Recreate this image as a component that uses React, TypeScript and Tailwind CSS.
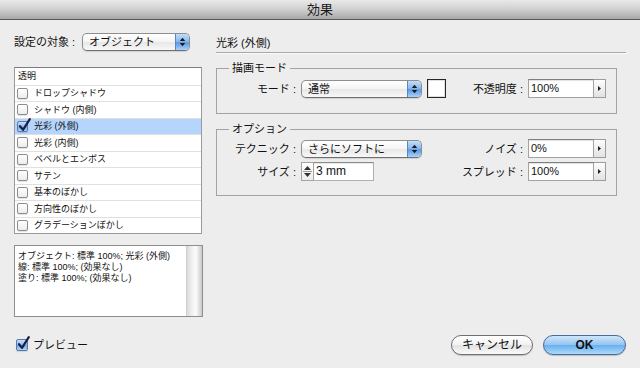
import React from "react";

const FONT = '"Liberation Sans", "Noto Sans CJK JP", sans-serif';

function PopArrows() {
  return (
    <svg width="7" height="10" viewBox="0 0 7 10">
      <path d="M3.5 0.8 L6.2 4 L0.8 4 Z" fill="#1a1a1a" />
      <path d="M3.5 9.2 L6.2 6 L0.8 6 Z" fill="#1a1a1a" />
    </svg>
  );
}

function Popup({ label, w }: { label: string; w: string }) {
  return (
    <div
      className={
        "flex h-[18px] shrink-0 overflow-hidden rounded-[5px] border border-[#8e8e8e] border-b-[#6f6f6f] bg-[linear-gradient(#ffffff,#f4f4f4_50%,#e7e7e7_51%,#f8f8f8)] shadow-[0_1px_1px_rgba(0,0,0,0.12)] " +
        w
      }
    >
      <div className="flex-1 truncate pl-[6px] text-[11px] leading-[16px] text-[#111]">{label}</div>
      <div className="flex w-[14px] items-center justify-center border-l border-[#5d84bb] bg-[linear-gradient(#c2ddf9,#8bbaf0_45%,#5b98e4_55%,#a8d2fa)]">
        <PopArrows />
      </div>
    </div>
  );
}

function NumField({ value }: { value: string }) {
  return (
    <div className="flex h-[19px] w-[78px] shrink-0">
      <div className="flex-1 border border-[#a2a2a2] border-t-[#7f7f7f] bg-white pl-[2px] text-[11px] leading-[17px] text-[#111] shadow-[inset_0_1px_1px_rgba(0,0,0,0.12)]">
        {value}
      </div>
      <div className="flex w-[12px] items-center justify-center border border-l-0 border-[#9c9c9c] bg-[linear-gradient(#fdfdfd,#e2e2e2)]">
        <svg width="3" height="5" viewBox="0 0 3 5">
          <path d="M0 0 L3 2.5 L0 5 Z" fill="#222" />
        </svg>
      </div>
    </div>
  );
}

function CheckBox({ checked, size }: { checked?: boolean; size: string }) {
  return (
    <div className="relative shrink-0">
      <div
        className={
          (checked
            ? "border-[#5c7aa6] bg-[linear-gradient(#c6e0fb,#8fbdf0_50%,#6ea6ea_51%,#a9d3fb)] "
            : "border-[#8d8d8d] bg-[linear-gradient(#ffffff,#ececec)] ") +
          "rounded-[2px] border shadow-[0_1px_1px_rgba(0,0,0,0.12)] " +
          size
        }
      />
      {checked && (
        <svg
          className="absolute left-[1px] top-[-3px]"
          width="13"
          height="14"
          viewBox="0 0 13 14"
        >
          <path
            d="M2 8.2 L5 11.8 L11.8 1.2"
            fill="none"
            stroke="#1b1f45"
            strokeWidth="2.2"
            strokeLinecap="round"
            strokeLinejoin="round"
          />
        </svg>
      )}
    </div>
  );
}

const items = [
  "ドロップシャドウ",
  "シャドウ (内側)",
  "光彩 (外側)",
  "光彩 (内側)",
  "ベベルとエンボス",
  "サテン",
  "基本のぼかし",
  "方向性のぼかし",
  "グラデーションぼかし",
];

export default function App() {
  return (
    <div
      className="h-[368px] w-[640px] overflow-hidden bg-[#ededed] text-[#111]"
      style={{ fontFamily: FONT }}
    >
      {/* title bar */}
      <div className="flex h-[20px] items-center justify-center border-b border-[#585858] bg-[linear-gradient(#e9e9e9,#cfcfcf_50%,#a7a7a7)] text-[13px] leading-[19px] text-[#1a1a1a]">
        効果
      </div>

      {/* main */}
      <div className="flex items-start pl-[14px] pt-[13px]">
        {/* left column */}
        <div className="flex w-[189px] flex-col">
          <div className="flex h-[18px] items-center">
            <span className="w-[68px] text-[11px] leading-[14px]">設定の対象 :</span>
            <Popup label="オブジェクト" w="w-[108px]" />
          </div>

          <div className="mt-[16px] flex h-[167px] w-[188px] flex-col border border-[#9a9a9a] border-t-[#7d7d7d] bg-white">
            <div className="flex h-[16.5px] items-center pl-[3px] text-[9px] leading-[12px]">透明</div>
            {items.map((t) => {
              const sel = t === "光彩 (外側)";
              return (
                <div
                  key={t}
                  className={
                    "flex h-[16.5px] items-center gap-[6px] border-t border-[#e0e0e0] pl-[2px] text-[9px] leading-[12px] " +
                    (sel ? "bg-[#b5d5fd]" : "")
                  }
                >
                  <CheckBox checked={sel} size="h-[11px] w-[11px]" />
                  <span>{t}</span>
                </div>
              );
            })}
          </div>

          <div className="mt-[11px] flex h-[72px] border border-[#8e8e8e] bg-white">
            <div className="flex-1 pl-[3px] pt-[5px] text-[9px] leading-[11px]">
              <div>オブジェクト: 標準 100%; 光彩 (外側)</div>
              <div>線: 標準 100%; (効果なし)</div>
              <div>塗り: 標準 100%; (効果なし)</div>
            </div>
            <div className="w-[16px] border-l border-[#d0d0d0] bg-[linear-gradient(to_right,#dadada,#f2f2f2_35%,#fbfbfb_60%,#c9c9c9)]" />
          </div>
        </div>

        {/* right column */}
        <div className="ml-[13px] flex w-[410px] flex-col">
          <div className="flex h-[20px] items-center border-b border-[#a9a9a9] text-[11px] leading-[14px] shadow-[0_1px_0_#fbfbfb]">
            光彩 (外側)
          </div>

          <fieldset className="mt-[8px] w-[401px] border border-[#a3a3a3] px-0 pb-[15px] pt-[4px]">
            <legend className="ml-[12px] px-[3px] text-[11px] leading-[14px]">描画モード</legend>
            <div className="flex h-[19px] items-center pr-[10px]">
              <span className="w-[82px] pr-[3px] text-right text-[11px] leading-[14px]">モード :</span>
              <div className="ml-[2px]">
                <Popup label="通常" w="w-[121px]" />
              </div>
              <div className="ml-[5px] h-[19px] w-[19px] border border-[#262626] bg-white shadow-[inset_0_0_0_1px_#e0e0e0]" />
              <div className="ml-auto flex items-center gap-[5px]">
                <span className="text-[11px] leading-[14px]">不透明度 :</span>
                <NumField value="100%" />
              </div>
            </div>
          </fieldset>

          <fieldset className="mt-[8px] w-[401px] border border-[#a3a3a3] px-0 pb-[14px] pt-[3px]">
            <legend className="ml-[12px] px-[3px] text-[11px] leading-[14px]">オプション</legend>
            <div className="flex h-[19px] items-center pr-[10px]">
              <span className="w-[82px] pr-[3px] text-right text-[11px] leading-[14px]">テクニック :</span>
              <div className="ml-[2px]">
                <Popup label="さらにソフトに" w="w-[121px]" />
              </div>
              <div className="ml-auto flex items-center gap-[5px]">
                <span className="text-[11px] leading-[14px]">ノイズ :</span>
                <NumField value="0%" />
              </div>
            </div>
            <div className="mt-[4px] flex h-[19px] items-center pr-[10px]">
              <span className="w-[82px] pr-[3px] text-right text-[11px] leading-[14px]">サイズ :</span>
              <div className="ml-[2px] flex h-[19px]">
                <div className="flex w-[13px] flex-col items-center justify-center gap-[1px] border border-[#a3a3a3] bg-[linear-gradient(#ffffff,#ececec)]">
                  <svg width="7" height="4" viewBox="0 0 7 4">
                    <path d="M3.5 0 L7 4 L0 4 Z" fill="#333" />
                  </svg>
                  <div className="h-px w-[9px] bg-[#9a9a9a]" />
                  <svg width="7" height="4" viewBox="0 0 7 4">
                    <path d="M0 0 L7 0 L3.5 4 Z" fill="#333" />
                  </svg>
                </div>
                <div className="w-[60px] border border-l-0 border-[#b0b0b0] border-t-[#8a8a8a] bg-white pl-[2px] text-[12px] leading-[17px] shadow-[inset_0_1px_1px_rgba(0,0,0,0.1)]">
                  3 mm
                </div>
              </div>
              <div className="ml-auto flex items-center gap-[5px]">
                <span className="text-[11px] leading-[14px]">スプレッド :</span>
                <NumField value="100%" />
              </div>
            </div>
          </fieldset>
        </div>
      </div>

      {/* bottom row */}
      <div className="mt-[18px] flex h-[20px] items-center pl-[16px] pr-[14px]">
        <CheckBox checked size="h-[12px] w-[12px]" />
        <span className="ml-[5px] text-[11px] leading-[16px]">プレビュー</span>
        <div className="ml-auto flex gap-[10px]">
          <div className="flex h-[20px] w-[82px] items-center justify-center rounded-full border border-[#6f6f6f] bg-[linear-gradient(#ffffff,#f2f2f2_50%,#e2e2e2_51%,#fafafa)] text-[12px] leading-[16px] shadow-[0_1px_1px_rgba(0,0,0,0.2)]">
            キャンセル
          </div>
          <div className="flex h-[20px] w-[83px] items-center justify-center rounded-full border border-[#4a6a98] bg-[linear-gradient(#cfe6fb,#92c3f1_50%,#6aaeec_51%,#a9dafd)] text-[12px] font-bold leading-[16px] shadow-[0_1px_1px_rgba(0,0,0,0.2)]">
            OK
          </div>
        </div>
      </div>
    </div>
  );
}
